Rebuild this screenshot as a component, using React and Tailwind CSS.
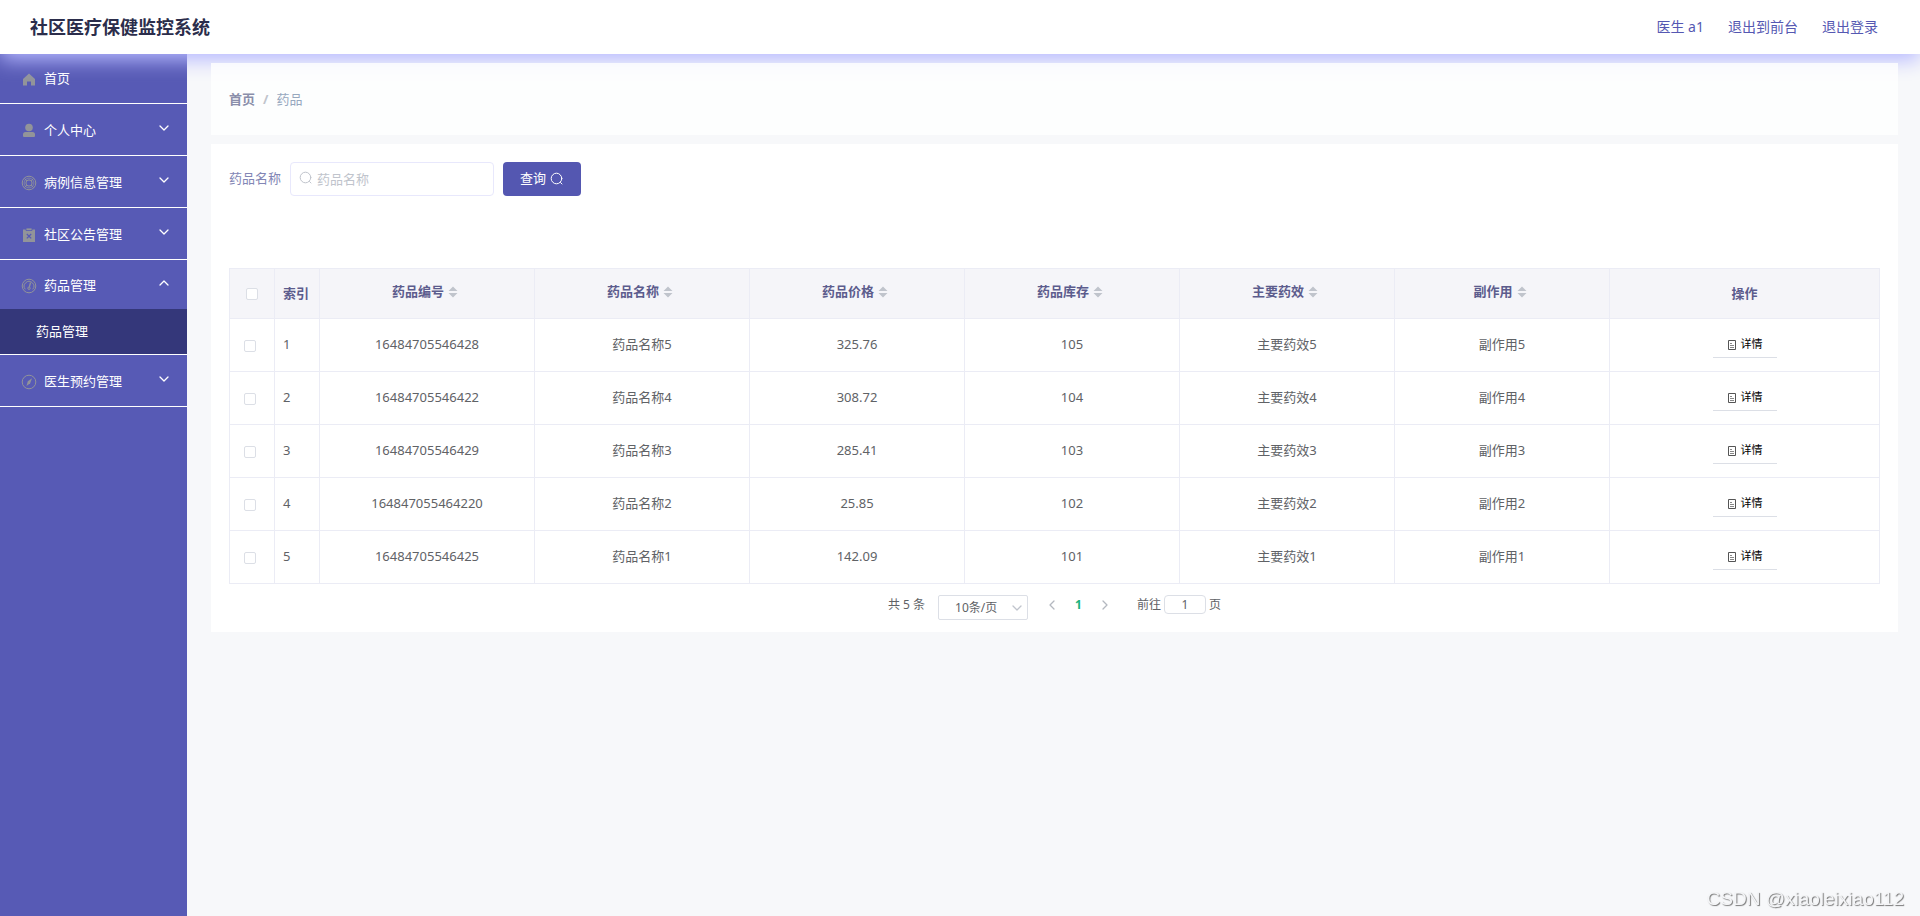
import { useState } from "react";

const MENU = [
  { name: "首页", icon: "home" },
  { name: "个人中心", icon: "user", children: [] },
  { name: "病例信息管理", icon: "help", children: [] },
  { name: "社区公告管理", icon: "notice", children: [] },
  { name: "药品管理", icon: "odometer", children: ["药品管理"] },
  { name: "医生预约管理", icon: "compass", children: [] },
];

const COLUMNS = ["药品编号", "药品名称", "药品价格", "药品库存", "主要药效", "副作用"];

const ROWS = [
  ["16484705546428", "药品名称5", "325.76", "105", "主要药效5", "副作用5"],
  ["16484705546422", "药品名称4", "308.72", "104", "主要药效4", "副作用4"],
  ["16484705546429", "药品名称3", "285.41", "103", "主要药效3", "副作用3"],
  ["164847055464220", "药品名称2", "25.85", "102", "主要药效2", "副作用2"],
  ["16484705546425", "药品名称1", "142.09", "101", "主要药效1", "副作用1"],
];

const checkboxClass =
  "block w-3 h-3 appearance-none rounded-xs border border-[#dcdfe6] bg-white checked:bg-[#5457b1]";

function MenuIcon({ name }) {
  return (
    <svg viewBox="0 0 16 16" className="w-4 h-4 shrink-0 text-[#929499]" fill="none" stroke="currentColor">
      {name === "home" && (
        <path d="M8 2.500 14 8v6.500h-4v-4H6v4H2V8z" fill="currentColor" stroke="none" />
      )}
      {name === "user" && (
        <g fill="currentColor" stroke="none">
          <circle cx="8" cy="4.500" r="3.800" />
          <path d="M2 13v-1.500A2.500 2.500 0 0 1 4.500 9h7a2.500 2.500 0 0 1 2.500 2.500V13q0 1-1 1H3q-1 0-1-1z" />
        </g>
      )}
      {name === "help" && (
        <g>
          <circle cx="8" cy="8" r="6.800" />
          <circle cx="8" cy="8" r="4.900" strokeWidth="0.7" />
          <circle cx="8" cy="8" r="3.100" />
          <path d="m3.400 3.400 2.400 2.400M12.600 3.400l-2.400 2.400M3.400 12.600l2.400-2.400M12.600 12.600l-2.400-2.400" />
        </g>
      )}
      {name === "notice" && (
        <g>
          <path d="M2 2.500h12v12.500H2z" fill="currentColor" stroke="none" />
          <path d="M5 1h6v2.500H5z" fill="currentColor" stroke="#575ab5" strokeWidth="0.8" />
          <path d="m5.800 7 4.400 4.400M10.200 7l-4.400 4.400" stroke="#575ab5" strokeWidth="1.300" />
        </g>
      )}
      {name === "odometer" && (
        <g>
          <circle cx="8" cy="8" r="6.800" />
          <path d="M4.300 11.300a4.800 4.800 0 1 1 7.400 0" />
          <path d="M9.500 4.500 8.400 8.800" strokeWidth="1.300" />
          <circle cx="8" cy="10.200" r="1.200" />
        </g>
      )}
      {name === "compass" && (
        <g>
          <circle cx="8" cy="8" r="6.800" />
          <path d="M11 4.300 9.200 9.200 5.500 12 6.800 7.300z" fill="currentColor" stroke="none" />
        </g>
      )}
    </svg>
  );
}

function Arrow({ className, d = "m2 4 4 4 4-4" }) {
  return (
    <svg viewBox="0 0 12 12" className={className} fill="none" stroke="currentColor">
      <path d={d} strokeWidth="1.300" strokeLinecap="round" strokeLinejoin="round" />
    </svg>
  );
}

function SearchIcon({ className }) {
  return (
    <svg viewBox="0 0 14 14" className={className} fill="none" stroke="currentColor" strokeLinecap="round">
      <circle cx="6.500" cy="6.500" r="5.300" />
      <path d="m10.500 10.500 1.500 1.500" />
    </svg>
  );
}

function SortCaret() {
  return (
    <svg viewBox="0 0 10 12" className="w-[10px] h-3 text-[#c0c4cc]" fill="currentColor">
      <path d="M5 0.500 9.500 5h-9zM5 11.500 0.500 7h9z" />
    </svg>
  );
}

function DetailIcon() {
  return (
    <svg viewBox="0 0 10 12" className="w-[10px] h-3" fill="none" stroke="#555">
      <path d="M1.500 1.500h7v9h-7z" />
      <path d="M3 4.500h2M3 6.500h4M3 8.500h4" stroke="#888" />
    </svg>
  );
}

function Sidebar() {
  const [open, setOpen] = useState("药品管理");

  return (
    <aside className="w-[187px] shrink-0 bg-[#575ab5] text-white text-[13px]">
      <nav>
        {MENU.map((item) => {
          const isOpen = open === item.name;
          return (
            <div key={item.name} className="border-b border-white">
              <button
                onClick={() => item.children && setOpen(isOpen ? "" : item.name)}
                className={
                  item.children
                    ? `${isOpen ? "h-[49px]" : "h-[51px]"} w-full flex items-center pl-[21px] pr-[17px] pt-[3px]`
                    : "h-[49px] w-full flex items-center pl-[21px] pr-[17px]"
                }
              >
                <MenuIcon name={item.icon} />
                <span className="ml-[7px]">{item.name}</span>
                {item.children && (
                  <Arrow
                    className="w-3 h-3 ml-auto mb-[6px]"
                    d={isOpen ? "m2 8 4-4 4 4" : "m2 4 4 4 4-4"}
                  />
                )}
              </button>
              {isOpen &&
                item.children.map((child) => (
                  <a key={child} href="#" className="h-[45px] flex items-center pl-9 bg-[#34377a]">
                    {child}
                  </a>
                ))}
            </div>
          );
        })}
      </nav>
    </aside>
  );
}

function DrugTable() {
  return (
    <table className="w-full table-fixed border-collapse border border-[#ebecf5] text-[13px] text-[#606266]">
      <colgroup>
        <col className="w-[45px]" />
        <col className="w-[45px]" />
        {COLUMNS.map((c) => (
          <col key={c} />
        ))}
        <col className="w-[270px]" />
      </colgroup>
      <thead className="bg-[#f5f5f9] text-[#5c5c8d]">
        <tr className="h-[50px]">
          <th className="border border-[#ebecf5] pl-4">
            <input type="checkbox" aria-label="全选" className={checkboxClass} />
          </th>
          <th className="border border-[#ebecf5] pl-2 text-left">索引</th>
          {COLUMNS.map((c) => (
            <th key={c} className="border border-[#ebecf5] pb-[3px]">
              <div className="flex items-center justify-center gap-1 pr-1">
                {c}
                <SortCaret />
              </div>
            </th>
          ))}
          <th className="border border-[#ebecf5]">操作</th>
        </tr>
      </thead>
      <tbody className="bg-white text-center">
        {ROWS.map((row, i) => (
          <tr key={row[0]} className="h-[53px]">
            <td className="border border-[#ebecf5] pl-[14px] pt-[2px]">
              <input type="checkbox" aria-label={row[1]} className={checkboxClass} />
            </td>
            <td className="border border-[#ebecf5] pl-2 text-left">{i + 1}</td>
            {row.map((cell, j) => (
              <td key={j} className="border border-[#ebecf5]">{cell}</td>
            ))}
            <td className="border border-[#ebecf5]">
              <button className="inline-flex items-center justify-center gap-1 w-16 h-[26px] border-b border-[#dcdfe6] text-[11px] text-black align-middle">
                <DetailIcon />
                详情
              </button>
            </td>
          </tr>
        ))}
      </tbody>
    </table>
  );
}

function Pagination() {
  return (
    <div className="mt-[11px] flex items-start justify-center text-xs leading-[19px] text-[#606266]">
      <span>共 5 条</span>
      <div className="relative ml-[13px]">
        <select
          aria-label="每页条数"
          className="block w-[90px] h-[25px] appearance-none rounded-xs border border-[#dcdfe6] bg-white pl-4 text-xs"
        >
          <option>10条/页</option>
        </select>
        <Arrow className="absolute right-[5px] top-[7px] w-3 h-3 text-[#c0c4cc] pointer-events-none" />
      </div>
      <button aria-label="上一页" className="ml-[18px] h-[19px] text-[#b4b8c0]">
        <Arrow className="w-3 h-3" d="m8 2-4 4 4 4" />
      </button>
      <button className="w-[41px] font-bold text-[#18b27c]">1</button>
      <button aria-label="下一页" className="h-[19px] text-[#b4b8c0]">
        <Arrow className="w-3 h-3" d="m4 2 4 4-4 4" />
      </button>
      <label className="ml-[26px] flex">
        前往
        <input
          defaultValue="1"
          className="mx-[3px] w-[42px] h-[19px] rounded-sm border border-[#dcdfe6] text-center text-xs"
        />
        页
      </label>
    </div>
  );
}

export default function App() {
  return (
    <div className="min-h-screen flex flex-col bg-[#f7f8fa] font-['Noto_Sans','Noto_Sans_CJK_SC',sans-serif]">
      <header className="relative z-10 h-[54px] px-[30px] flex items-center justify-between bg-white shadow-[0_6px_20px_#b6b8ff]">
        <h1 className="text-[18px] font-bold text-[#2b2d4b]">社区医疗保健监控系统</h1>
        <nav className="flex items-center gap-6 pr-3 text-sm text-[#5558b2]">
          <a href="#">医生 a1</a>
          <a href="#">退出到前台</a>
          <a href="#">退出登录</a>
        </nav>
      </header>

      <div className="flex flex-1">
        <Sidebar />
        <main className="flex-1 min-w-0 pt-[9px] pl-6 pr-[22px]">
          <div className="relative z-20 h-[72px] px-[18px] pt-[2px] flex items-center gap-2 bg-white/80 text-[13px] text-[#97a8be]">
            <a href="#" className="font-bold text-[#8a8eaa]">首页</a>
            <span className="font-bold text-[#c0c4cc]">/</span>
            <span>药品</span>
          </div>

          <section className="mt-[9px] px-[18px] pt-[18px] pb-3 bg-white">
            <form className="flex items-center text-[13px]" onSubmit={(e) => e.preventDefault()}>
              <label htmlFor="drug" className="text-[#8286b5]">药品名称</label>
              <div className="relative ml-[9px]">
                <SearchIcon className="absolute left-[9px] top-[9px] w-[14px] h-[14px] text-[#c0c4cc]" />
                <input
                  id="drug"
                  placeholder="药品名称"
                  className="block w-[204px] h-[34px] rounded-sm border border-[#e8e8fc] pl-[26px] pr-3 placeholder:text-[#c0c4cc]"
                />
              </div>
              <button className="ml-[9px] w-[78px] h-[34px] flex items-center justify-center gap-1 rounded-sm bg-[#5457b1] text-white">
                查询
                <SearchIcon className="w-[14px] h-[14px]" />
              </button>
            </form>
            <div className="mt-[72px]">
              <DrugTable />
            </div>
            <Pagination />
          </section>
        </main>
      </div>

      <div className="fixed right-4 bottom-[3px] font-['Liberation_Sans',sans-serif] text-[19px] text-[#f4f5f7] [text-shadow:1px_1px_1px_#777] pointer-events-none">
        CSDN @xiaoleixiao112
      </div>
    </div>
  );
}
